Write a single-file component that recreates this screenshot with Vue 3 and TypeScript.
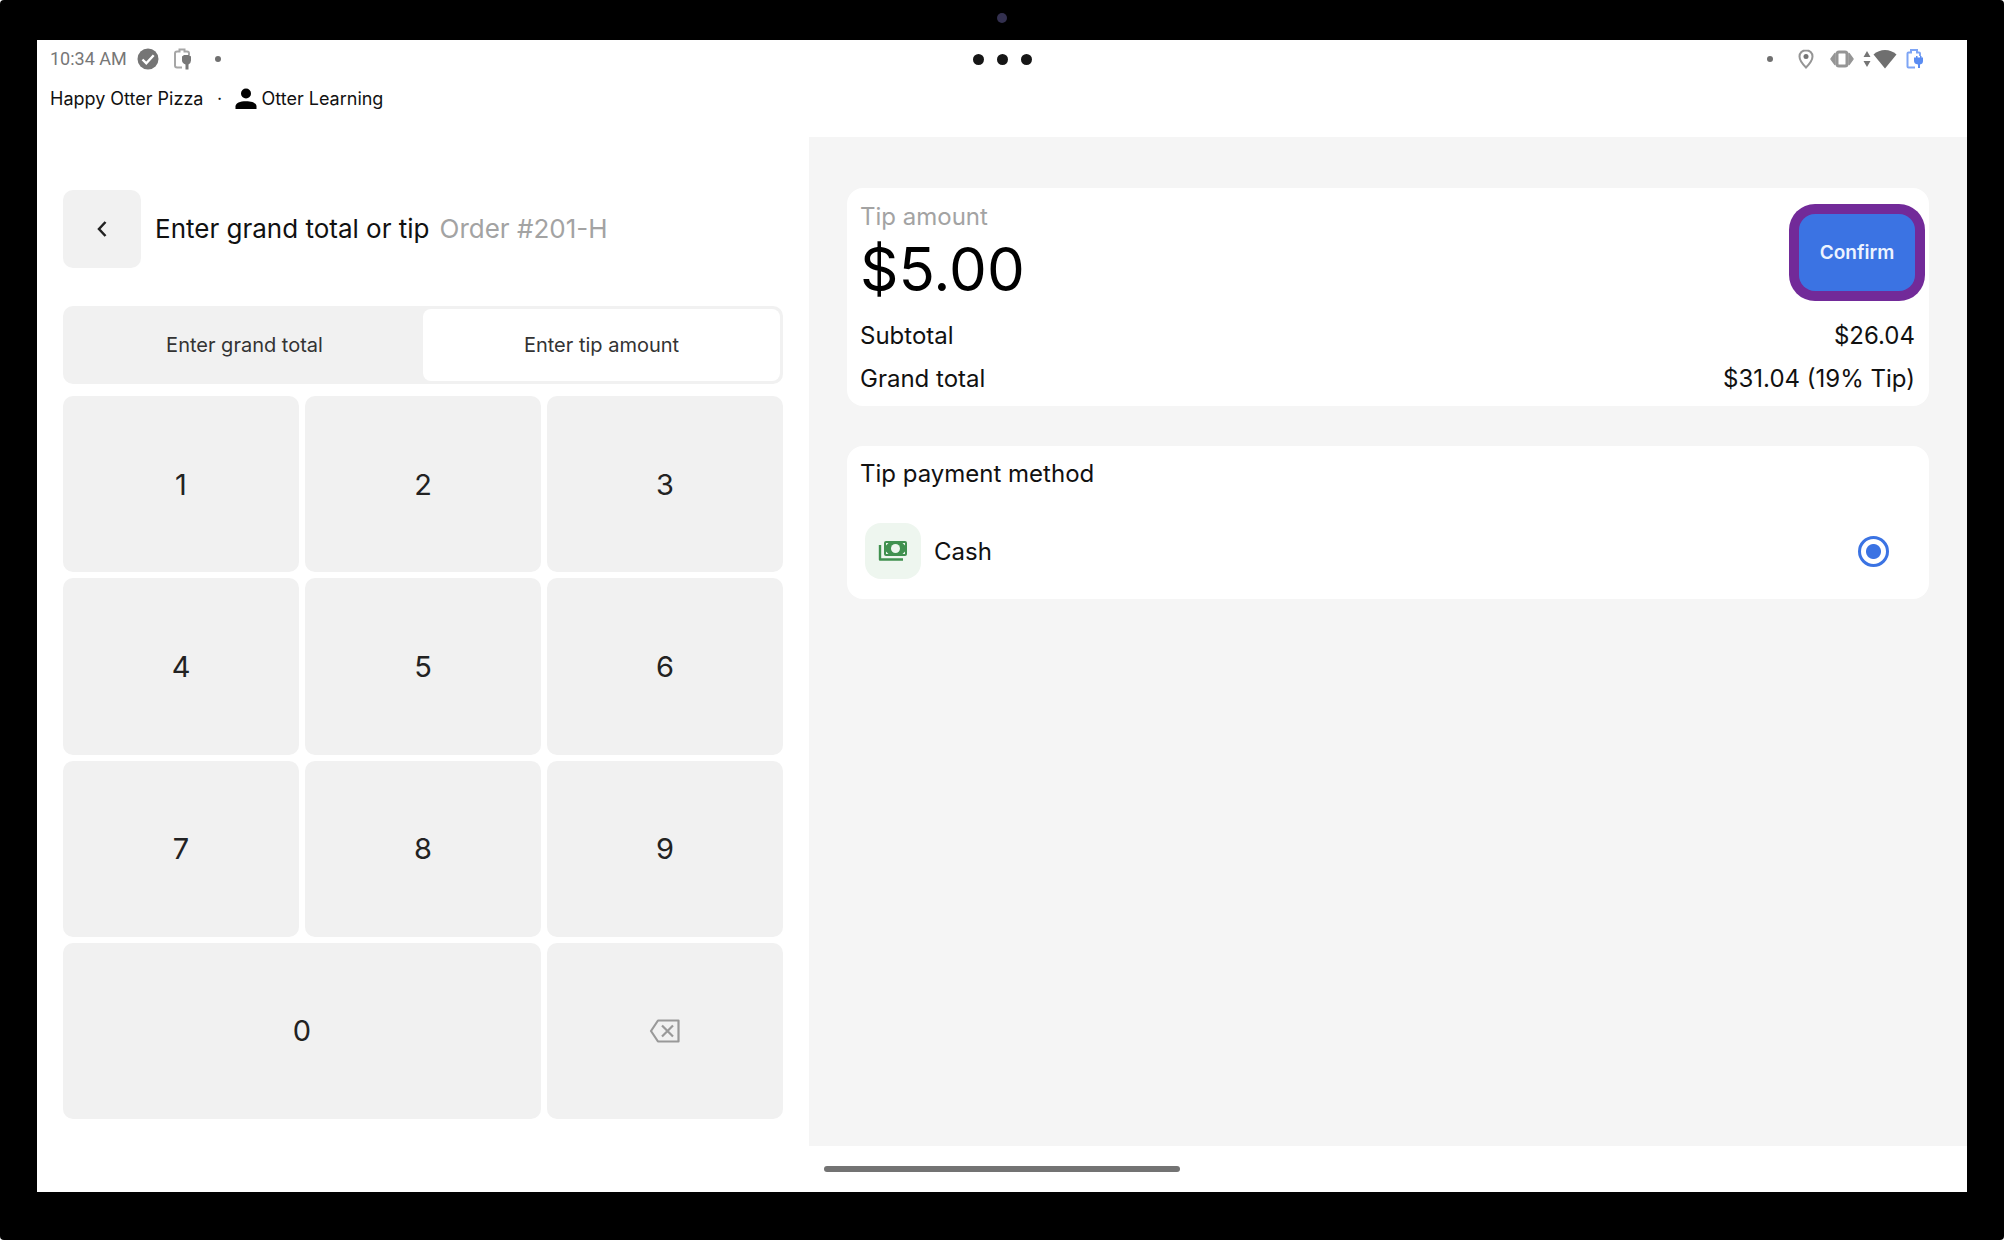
<script setup lang="ts">
import { computed, ref } from 'vue'

type Mode = 'total' | 'tip'

const subtotal = 2604
const mode = ref<Mode>('tip')
const tip = ref(500)
const method = ref('cash')
const digits = [1, 2, 3, 4, 5, 6, 7, 8, 9, 0]

const money = (cents: number): string => '$' + (cents / 100).toFixed(2)
const grandTotal = computed(
  () => `${money(subtotal + tip.value)} (${Math.round((tip.value / subtotal) * 100)}% Tip)`
)

function press(digit: number): void {
  tip.value = Math.min(tip.value * 10 + digit, 999999)
}

function erase(): void {
  tip.value = Math.floor(tip.value / 10)
}
</script>

<template>
  <div class="device">
    <span class="camera"></span>
    <div class="screen">
      <header class="top">
        <div class="status">
          <div class="side left">
            <span class="clock">10:34 AM</span>
            <svg class="check" width="22" height="22" viewBox="0 0 22 22">
              <circle cx="11" cy="11" r="10.5" fill="#757575" />
              <path d="M5.5 11.5l3.8 3.8 7.4-8" fill="none" stroke="#fff" stroke-width="2.4" />
            </svg>
            <svg class="battery" width="20" height="24" viewBox="0 0 20 24">
              <path d="M9 20.500H4q-2 0-2-2V6.500q0-2 2-2h2.500V2.500h5v2H14q2 0 2 2V8" fill="none" stroke="#a6a6a6" stroke-width="2" />
              <path d="M9 9.500l2-1.500h5l2 1.500V13.500q0 2.500-2.500 4V22.500h-3V17.500Q9 16 9 13.500z" fill="#777" />
            </svg>
            <span class="bullet"></span>
          </div>
          <div class="more"><i></i><i></i><i></i></div>
          <div class="side right">
            <span class="bullet"></span>
            <svg width="16" height="20" viewBox="0 0 16 20">
              <path d="M8 1.200C4.200 1.200 1.500 4 1.500 7.500c0 4.500 6.500 11 6.500 11s6.500-6.500 6.500-11C14.500 4 11.800 1.200 8 1.200z" fill="none" stroke="#959595" stroke-width="2" />
              <circle cx="8" cy="7.500" r="2.500" fill="#757575" />
            </svg>
            <svg class="vibrate" width="24" height="18" viewBox="0 0 24 18">
              <path d="M1 9l4-5.500v11zM23 9l-4-5.500v11z" fill="#959595" stroke="#959595" stroke-width="1.500" stroke-linejoin="round" />
              <rect x="7" y="2" width="10" height="14" rx="2" fill="#fff" stroke="#959595" stroke-width="3" />
            </svg>
            <svg class="arrows" width="8" height="16" viewBox="0 0 8 16">
              <path d="M4 0l3.500 6h-7zM4 16l3.500-6h-7z" fill="#757575" />
            </svg>
            <svg class="wifi" width="24" height="20" viewBox="0 0 24 20">
              <path d="M12 19.500L.5 5.500Q5.500 1 12 1t11.500 4.500z" fill="#6f6f6f" />
            </svg>
            <svg class="battery" width="20" height="22" viewBox="0 0 20 22">
              <path d="M10 19.500H3.500Q2.500 19.500 2.500 18.500V5.500q0-1 1-1H6V2h6v2.500h2q1 0 1 1V8" fill="none" stroke="#7ea5f5" stroke-width="2" />
              <path d="M9 9.500h2V8h1.500v1.500h2.500V8h1.500v1.500H18V13q0 3-3 3.500V20h-2v-3.500q-4-.5-4-3.500z" fill="#5a8cf2" />
            </svg>
          </div>
        </div>
        <div class="account">
          <span>Happy Otter Pizza</span>
          <span class="sep">·</span>
          <svg width="22" height="22" viewBox="0 0 22 22">
            <circle cx="11" cy="5.500" r="5" fill="#000" />
            <path d="M.5 21v-2.500C.5 15 5 13.200 11 13.200s10.500 1.800 10.500 5.300V21z" fill="#000" />
          </svg>
          <span>Otter Learning</span>
        </div>
      </header>

      <main class="content">
        <section class="entry">
          <div class="heading">
            <button class="back" type="button" aria-label="Back">
              <svg width="12" height="18" viewBox="0 0 12 18">
                <path d="M9.500 2L3 9l6.500 7" fill="none" stroke="#222" stroke-width="2.500" />
              </svg>
            </button>
            <h1>Enter grand total or tip</h1>
            <span class="order">Order #201-H</span>
          </div>
          <div class="tabs">
            <button type="button" :class="{ active: mode === 'total' }" @click="mode = 'total'">Enter grand total</button>
            <button type="button" :class="{ active: mode === 'tip' }" @click="mode = 'tip'">Enter tip amount</button>
          </div>
          <div class="keypad">
            <button v-for="d in digits" :key="d" type="button" :class="{ wide: d === 0 }" @click="press(d)">{{ d }}</button>
            <button type="button" aria-label="Delete" @click="erase">
              <svg width="32" height="24" viewBox="0 0 32 24">
                <path d="M9 1.500h20.500v21H9L2 12z" fill="none" stroke="#999" stroke-width="2.200" stroke-linejoin="round" />
                <path d="M13 6.500l11 11M24 6.500l-11 11" stroke="#999" stroke-width="2.200" />
              </svg>
            </button>
          </div>
        </section>

        <section class="summary">
          <div class="card totals">
            <div class="lead">
              <div>
                <div class="label">Tip amount</div>
                <div class="amount">{{ money(tip) }}</div>
              </div>
              <button class="confirm" type="button">Confirm</button>
            </div>
            <dl>
              <div><dt>Subtotal</dt><dd>{{ money(subtotal) }}</dd></div>
              <div><dt>Grand total</dt><dd>{{ grandTotal }}</dd></div>
            </dl>
          </div>
          <div class="card payment">
            <h2>Tip payment method</h2>
            <label class="option">
              <span class="cash">
                <svg width="30" height="22" viewBox="0 0 30 22">
                  <path d="M2 5v14.500h23" fill="none" stroke="#419150" stroke-width="2.400" stroke-linejoin="round" />
                  <rect x="6" y="1" width="23" height="15" rx="2" fill="#419150" />
                  <circle cx="17.500" cy="8.500" r="4.500" fill="#eef6ef" />
                  <path d="M8 5.500V3h2.500zM27 5.500V3h-2.500zM8 11.500V14h2.500zM27 11.500V14h-2.500z" fill="#eef6ef" />
                </svg>
              </span>
              <span class="name">Cash</span>
              <input v-model="method" type="radio" name="method" value="cash" />
            </label>
          </div>
        </section>
      </main>

      <footer class="nav"><span></span></footer>
    </div>
  </div>
</template>

<style>
body {
  margin: 0;
  background: #fff;
}
</style>

<style scoped>
.device {
  position: relative;
  box-sizing: border-box;
  display: flex;
  min-height: 100vh;
  padding: 40px 37px 48px;
  border-radius: 4px;
  background: #000;
  color: #111;
  font-family: Inter, "Liberation Sans", sans-serif;
}

.camera {
  position: absolute;
  top: 13px;
  left: 50%;
  width: 10px;
  height: 10px;
  margin-left: -5px;
  border-radius: 50%;
  background: #33304f;
}

.screen {
  display: flex;
  flex: 1;
  flex-direction: column;
  background: #fff;
}

svg {
  display: block;
  flex: none;
}

button {
  padding: 0;
  border: 0;
  font: inherit;
  color: inherit;
  cursor: pointer;
}

.top {
  height: 97px;
}

.status {
  display: grid;
  grid-template-columns: 1fr auto 1fr;
  align-items: center;
  height: 38px;
}

.side {
  display: flex;
  align-items: center;
}

.left {
  padding-left: 13px;
}

.right {
  justify-content: flex-end;
  padding-right: 42px;
}

.clock {
  font: 18px/24px Roboto, sans-serif;
  color: #777;
}

.left .check {
  margin-left: 10px;
}

.left .battery {
  margin: 0 22px 0 14px;
}

.bullet {
  width: 6px;
  height: 6px;
  border-radius: 50%;
  background: #707070;
}

.right .bullet {
  margin-right: 25px;
}

.vibrate {
  margin: 0 9px 0 16px;
}

.wifi {
  margin: 0 8px 0 2px;
}

.more {
  display: flex;
  gap: 13px;
}

.more i {
  width: 11px;
  height: 11px;
  border-radius: 50%;
  background: #161616;
}

.account {
  display: flex;
  align-items: center;
  height: 42px;
  padding-left: 13px;
  font-size: 18px;
  line-height: 24px;
}

.account .sep {
  width: 32px;
  text-align: center;
}

.account svg {
  margin-right: 4px;
}

.content {
  display: grid;
  flex: 1;
  grid-template-columns: 2fr 3fr;
}

.entry {
  display: flex;
  flex-direction: column;
  padding: 53px 26px 27px;
}

.heading {
  display: flex;
  align-items: center;
  margin-bottom: 38px;
}

.back {
  display: flex;
  align-items: center;
  justify-content: center;
  width: 78px;
  height: 78px;
  border-radius: 10px;
  background: #f1f1f1;
}

h1,
h2 {
  margin: 0;
  font-weight: 400;
}

h1,
.order {
  font-size: 26px;
  line-height: 36px;
  white-space: nowrap;
}

h1 {
  margin: 0 10px 0 14px;
}

.order {
  color: #a3a3a3;
}

.tabs {
  display: grid;
  grid-template-columns: 1fr 1fr;
  height: 72px;
  margin-bottom: 12px;
  padding: 3px;
  border-radius: 10px;
  background: #f1f1f1;
}

.tabs button {
  border-radius: 8px;
  background: none;
  font-size: 20px;
  color: #333;
}

.tabs .active {
  background: #fff;
}

.keypad {
  display: grid;
  flex: 1;
  grid-template-columns: repeat(3, 1fr);
  grid-auto-rows: 1fr;
  gap: 6px;
}

.keypad button {
  display: flex;
  align-items: center;
  justify-content: center;
  border-radius: 10px;
  background: #f1f1f1;
  font-size: 29px;
  color: #222;
}

.keypad .wide {
  grid-column: span 2;
}

.summary {
  display: flex;
  flex-direction: column;
  gap: 40px;
  padding: 51px 38px;
  background: #f5f5f5;
}

.card {
  padding: 0 14px 0 13px;
  border-radius: 16px;
  background: #fff;
  font-size: 24px;
}

.totals {
  padding-top: 12px;
  padding-bottom: 6px;
}

.lead {
  display: flex;
  align-items: flex-start;
  justify-content: space-between;
  margin-bottom: 10px;
}

.label {
  line-height: 34px;
  color: #a3a3a3;
}

.amount {
  font-size: 60px;
  line-height: 70px;
  color: #000;
}

.confirm {
  width: 116px;
  height: 77px;
  margin-top: 14px;
  border-radius: 16px;
  background: #3b73e3;
  box-shadow: 0 0 0 10px #722a99;
  font-size: 19px;
  font-weight: 600;
  color: #edf3ff;
}

dl {
  margin: 0;
}

dl div {
  display: flex;
  justify-content: space-between;
  line-height: 43px;
}

dd {
  margin: 0;
}

.payment {
  padding-top: 8px;
  padding-bottom: 20px;
}

h2 {
  margin-bottom: 29px;
  font-size: 24px;
  line-height: 40px;
}

.option {
  display: flex;
  align-items: center;
  padding: 0 26px 0 5px;
}

.cash {
  display: flex;
  align-items: center;
  justify-content: center;
  width: 56px;
  height: 56px;
  margin-right: 13px;
  border-radius: 16px;
  background: #eef6ef;
}

.name {
  flex: 1;
}

.option input {
  width: 31px;
  height: 31px;
  margin: 0;
  border: 3px solid #3b73e3;
  border-radius: 50%;
  appearance: none;
}

.option input:checked {
  background: radial-gradient(circle, #3b73e3 7px, #fff 8px);
}

.nav {
  display: flex;
  align-items: center;
  justify-content: center;
  height: 46px;
}

.nav span {
  width: 356px;
  height: 6px;
  border-radius: 3px;
  background: #737373;
}
</style>
